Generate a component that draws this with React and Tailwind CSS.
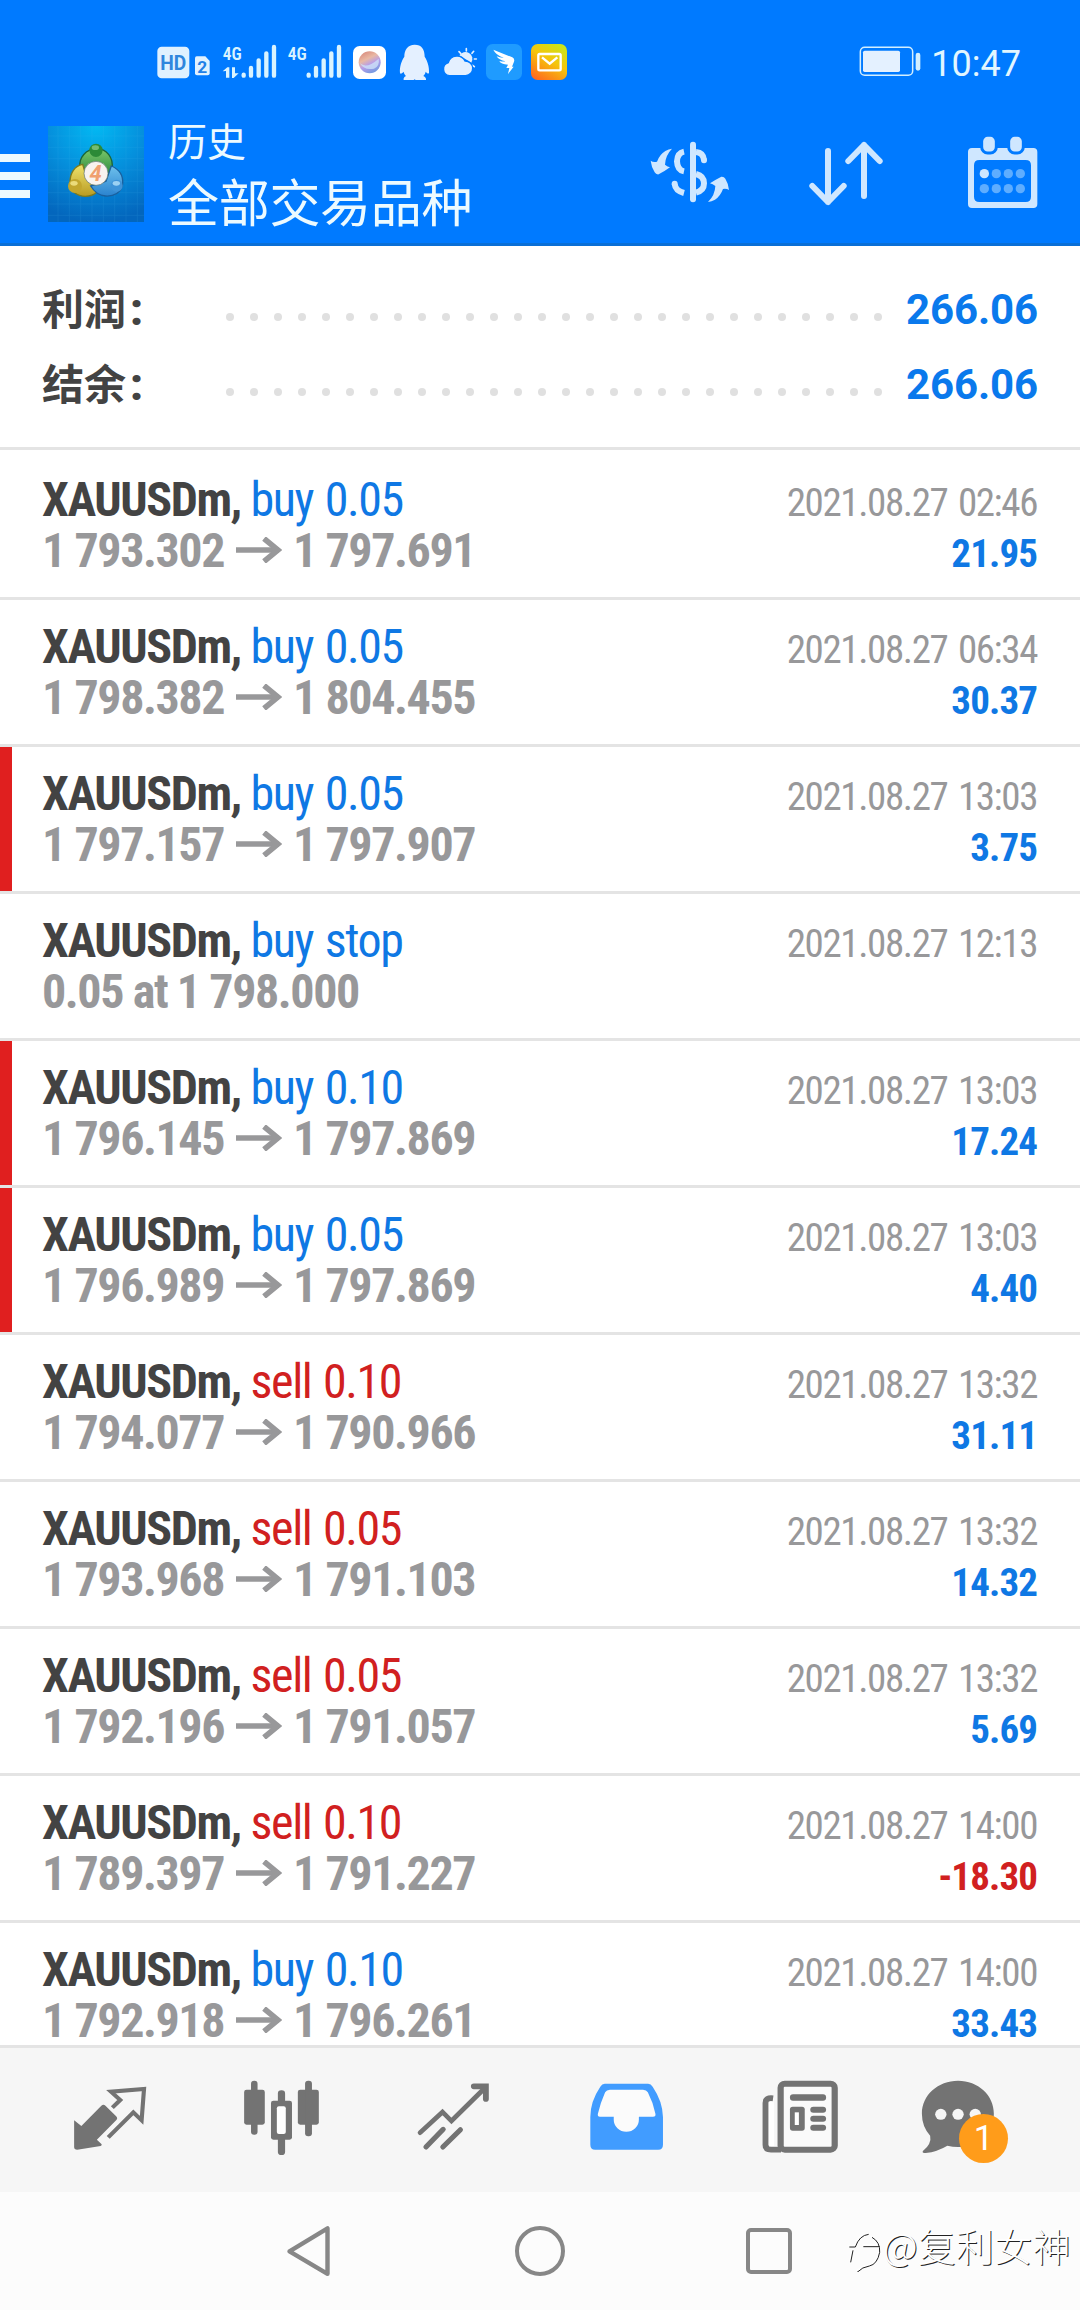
import React from "react";

const trades = [
  { side: "buy", volume: "0.05", open: "1 793.302", close: "1 797.691", time: "2021.08.27 02:46", profit: "21.95" },
  { side: "buy", volume: "0.05", open: "1 798.382", close: "1 804.455", time: "2021.08.27 06:34", profit: "30.37" },
  { side: "buy", volume: "0.05", open: "1 797.157", close: "1 797.907", time: "2021.08.27 13:03", profit: "3.75", marked: true },
  { side: "buy", volume: "stop", pending: "0.05 at 1 798.000", time: "2021.08.27 12:13" },
  { side: "buy", volume: "0.10", open: "1 796.145", close: "1 797.869", time: "2021.08.27 13:03", profit: "17.24", marked: true },
  { side: "buy", volume: "0.05", open: "1 796.989", close: "1 797.869", time: "2021.08.27 13:03", profit: "4.40", marked: true },
  { side: "sell", volume: "0.10", open: "1 794.077", close: "1 790.966", time: "2021.08.27 13:32", profit: "31.11" },
  { side: "sell", volume: "0.05", open: "1 793.968", close: "1 791.103", time: "2021.08.27 13:32", profit: "14.32" },
  { side: "sell", volume: "0.05", open: "1 792.196", close: "1 791.057", time: "2021.08.27 13:32", profit: "5.69" },
  { side: "sell", volume: "0.10", open: "1 789.397", close: "1 791.227", time: "2021.08.27 14:00", profit: "-18.30" },
  { side: "buy", volume: "0.10", open: "1 792.918", close: "1 796.261", time: "2021.08.27 14:00", profit: "33.43" },
];

const summary = [
  { label: "利润", value: "266.06" },
  { label: "结余", value: "266.06" },
];

const SignalBars = ({ x }) => (
  <g stroke="#d9f3ff" strokeWidth="13" strokeLinecap="round">
    <path d={`M${x} 134v3M${x + 22} 114v23M${x + 45} 91v46M${x + 68} 70v67M${x + 91} 51v86`} />
  </g>
);

const StatusBar = () => (
  <div className="flex h-[101px] items-start pt-[42px] pl-[156px] pr-[59px]">
    <svg className="h-10 w-14" viewBox="48 36 168 120">
      <rect x="52" y="50" width="96" height="95" rx="13" fill="#dff1ff" />
      <text x="100" y="119" textAnchor="middle" fontSize="60" textLength="78" lengthAdjust="spacingAndGlyphs" className="font-['Roboto'] font-bold" fill="#2f86dd">HD</text>
      <path d="M170 79h26l13 14v37q0 6-6 6h-32q-6 0-6-6V85q0-6 5-6z" fill="#dff1ff" />
      <text x="187" y="128" textAnchor="middle" fontSize="52" className="font-['Roboto'] font-bold" fill="#1f80e6">2</text>
    </svg>
    <svg className="ml-2.5 h-10 w-[55px]" viewBox="246 36 165 120">
      <text x="248" y="89" fontSize="56" textLength="57" lengthAdjust="spacingAndGlyphs" className="font-['Roboto_Condensed'] font-semibold" fill="#d9f3ff">4G</text>
      <path d="M248 124l14-12h6v31h-10v-20zM276 112h9v18h11l-15 14h-5z" fill="#d9f3ff" />
      <SignalBars x={311} />
    </svg>
    <svg className="ml-2.5 h-10 w-[55px]" viewBox="441 36 165 120">
      <text x="443" y="89" fontSize="56" textLength="57" lengthAdjust="spacingAndGlyphs" className="font-['Roboto_Condensed'] font-semibold" fill="#d9f3ff">4G</text>
      <SignalBars x={506} />
    </svg>
    <svg className="ml-2.5 h-10 w-[35px]" viewBox="636 36 105 120">
      <defs>
        <linearGradient id="ball" x1="0.2" y1="0" x2="0.7" y2="1">
          <stop offset="0" stopColor="#d98a7c" />
          <stop offset="0.35" stopColor="#e9b9a4" />
          <stop offset="0.6" stopColor="#b79ee8" />
          <stop offset="1" stopColor="#6e9ae0" />
        </linearGradient>
      </defs>
      <rect x="639" y="48" width="99" height="99" rx="20" fill="#fff" />
      <circle cx="689" cy="97" r="33" fill="url(#ball)" />
      <path d="M660 100q20 18 56-14q4 22-14 30q-30 6-42-16z" fill="#cfe6fa" opacity=".75" />
    </svg>
    <svg className="ml-3 h-10 w-[31px]" viewBox="777 36 93 120">
      <path d="M824 44c-21 0-31 15-31 36c-8 12-15 30-13 49c2 5 7 0 11-4c1 6 4 10 7 13c-6 3-8 6-7 12h30l3-2l3 2h31c1-6-2-9-8-12c4-4 6-8 7-13c4 5 9 8 10 3c1-19-5-36-13-48c0-22-9-36-30-36z" fill="#e4f0ff" />
    </svg>
    <svg className="ml-3 h-10 w-9" viewBox="906 36 108 120">
      <path d="M958 76a20 20 0 1 1 36 22" fill="#e4f0ff" />
      <path d="M979 56v7M957 65l5 5M1001 64l-5 6M1003 87h6M998 106l5 4" stroke="#e4f0ff" strokeWidth="5" strokeLinecap="round" />
      <path d="M928 137a20 20 0 0 1-3-39a27 27 0 0 1 50-5a22 22 0 0 1 2 44z" fill="#e4f0ff" stroke="#007aff" strokeWidth="4" />
    </svg>
    <svg className="ml-[7px] h-10 w-[38px]" viewBox="1035 36 114 120">
      <rect x="1038" y="42" width="108" height="108" rx="20" fill="#1f9bff" />
      <path d="M1060 59l57 23q8 5 5 13l-6 15h5l-17 22l4-18h-9l5-10q-22-1-26-11q13 3 18 1q-20-4-26-15q12 5 21 4q-24-8-31-24z" fill="#fff" />
    </svg>
    <svg className="ml-[7px] h-10 w-[38px]" viewBox="1170 36 114 120">
      <defs>
        <linearGradient id="mail" x1="0.8" y1="0" x2="0.2" y2="1">
          <stop offset="0" stopColor="#c9e51a" />
          <stop offset="0.45" stopColor="#f5c50c" />
          <stop offset="1" stopColor="#ff6a1e" />
        </linearGradient>
      </defs>
      <rect x="1173" y="42" width="108" height="108" rx="20" fill="url(#mail)" />
      <rect x="1195" y="72" width="67" height="49" rx="4" fill="none" stroke="#fff" strokeWidth="7" />
      <path d="M1206 82l23 19l23-19" fill="none" stroke="#fff" strokeWidth="7" />
    </svg>
    <div className="ml-auto flex h-10">
      <svg className="mr-2.5 h-10 w-[62px]" viewBox="58 36 186 120">
        <rect x="62" y="52" width="157" height="84" rx="13" fill="none" stroke="#d3efff" strokeWidth="4.5" />
        <rect x="70" y="62" width="111" height="64" rx="5" fill="#e4f1ff" />
        <rect x="228" y="68" width="14" height="54" rx="7" fill="#d3efff" />
      </svg>
      <span className="pt-px text-[36px] leading-[42px] text-[#e2f6ff]">10:47</span>
    </div>
  </div>
);

const AppLogo = () => (
  <svg className="h-24 w-24" viewBox="24 18 288 288">
    <defs>
      <radialGradient id="sky" cx="0.5" cy="0" r="1">
        <stop offset="0" stopColor="#02b9f3" />
        <stop offset="0.5" stopColor="#058fdc" />
        <stop offset="1" stopColor="#0366bd" />
      </radialGradient>
      <linearGradient id="green" x1="0" y1="0" x2="0" y2="1">
        <stop offset="0" stopColor="#7cc96a" />
        <stop offset="1" stopColor="#22803a" />
      </linearGradient>
      <linearGradient id="yellow" x1="0" y1="0" x2="0" y2="1">
        <stop offset="0" stopColor="#efe36c" />
        <stop offset="1" stopColor="#b99b22" />
      </linearGradient>
      <linearGradient id="azure" x1="0" y1="0" x2="0" y2="1">
        <stop offset="0" stopColor="#6ec0ec" />
        <stop offset="1" stopColor="#2a83cf" />
      </linearGradient>
    </defs>
    <rect x="24" y="18" width="288" height="288" fill="url(#sky)" />
    <path d="M54 18v288M88 18v288M122 18v288M156 18v288M190 18v288M224 18v288M258 18v288M292 18v288M24 48h288M24 82h288M24 116h288M24 150h288M24 184h288M24 218h288M24 252h288M24 286h288" stroke="#4bb9f0" strokeWidth="2" opacity=".18" />
    <g strokeWidth="4">
      <path d="M120 142c-4-30 18-54 49-56c32 0 52 28 47 60c-4 18-14 28-26 30l-50-20z" fill="url(#green)" stroke="#1c6537" />
      <path d="M128 133c-24 4-38 26-38 54c0 28 22 42 46 42c16 0 26-4 34-12l-32-50z" fill="url(#yellow)" stroke="#7d7a1d" />
      <path d="M214 138c24 10 36 30 34 54c-4 26-26 38-52 36c-22-2-34-14-44-30l46-14z" fill="url(#azure)" stroke="#1a609e" />
    </g>
    <circle cx="168" cy="91" r="20" fill="#2c8a37" />
    <ellipse cx="166" cy="83" rx="11" ry="7" fill="#93d08b" opacity=".7" />
    <circle cx="105" cy="198" r="21" fill="#c2a62d" />
    <ellipse cx="102" cy="190" rx="11" ry="7" fill="#f5e88f" opacity=".8" />
    <circle cx="230" cy="197" r="18" fill="#3e93d8" />
    <ellipse cx="229" cy="190" rx="11" ry="7" fill="#b4e1fa" opacity=".8" />
    <circle cx="168" cy="160" r="36" fill="#f8f3ef" stroke="#58706a" strokeWidth="2" />
    <text x="167" y="184" textAnchor="middle" fontSize="66" className="font-['Roboto'] font-bold italic" fill="#f0a070">4</text>
  </svg>
);

const Header = () => (
  <header className="h-[246px] border-b-[3px] border-[#0a6fd6] bg-[#007aff]">
    <StatusBar />
    <div className="flex items-start pr-10">
      <div className="mt-[53px] flex w-[30px] flex-col gap-2.5">
        <div className="h-2 bg-[#ecf9ff]"></div>
        <div className="h-2 bg-[#ecf9ff]"></div>
        <div className="h-2 bg-[#ecf9ff]"></div>
      </div>
      <div className="mt-[25px] ml-[18px]">
        <AppLogo />
      </div>
      <div className="mt-[8px] ml-6 font-['Noto_Sans_CJK_SC',sans-serif] text-[#ecfaff]">
        <div className="text-[39px] leading-[61px]">历史</div>
        <div className="text-[51px] leading-[61px] tracking-[-0.3px]">全部交易品种</div>
      </div>
      <div className="mt-[34px] ml-auto flex">
        {/* currency exchange */}
        <svg className="h-[76px] w-[84px]" viewBox="84 75 252 228" fill="#cfe7ff">
          <path d="M92 152q8 6 19 3q8-22 25-32q10-6 20-7q-20 20-21 48q8 6 15 8q-13 10-34 21q-8 1-12-6q-10-16-12-35z" />
          <path d="M327 240q-8-5-18-3q-8 22-24 32q-10 6-21 7q21-20 22-48q-8-6-16-8q14-10 34-20q8-1 12 6q9 14 11 34z" />
          <rect x="210" y="95" width="18" height="182" rx="9" />
          <path d="M192 125q-20 4-21 29q1 26 21 30M164 222q2 20 28 27M228 126q22 2 24 24M228 192q24 6 24 28t-24 28" fill="none" stroke="#cfe7ff" strokeWidth="18" />
          <circle cx="164" cy="221" r="9" />
          <circle cx="252" cy="151" r="9" />
        </svg>
        <svg className="ml-[75px] h-[76px] w-[79px]" viewBox="561 75 237 228" fill="none" stroke="#cfe7ff" strokeWidth="18" strokeLinecap="round" strokeLinejoin="round">
          <path d="M624 123v153M577 228l47 48l47-48M732 258V105M685 153l47-48l47 48" />
        </svg>
        <svg className="ml-20 h-[76px] w-[74px]" viewBox="1038 75 222 228">
          <path fillRule="evenodd" d="M1056 114H1240q12 0 12 12V282q0 12-12 12H1056q-12 0-12-12V126q0-12 12-12zM1078 150q-16 0-16 16v94q0 16 16 16h139q16 0 16-16v-94q0-16-16-16z" fill="#cfe7ff" />
          <rect x="1085" y="76" width="44" height="53" rx="18" fill="#cfe7ff" stroke="#007aff" strokeWidth="9" />
          <rect x="1166" y="76" width="44" height="53" rx="18" fill="#cfe7ff" stroke="#007aff" strokeWidth="9" />
          <circle cx="1093" cy="191" r="14" fill="#cfe7ff" />
          <g fill="#5eadff">
            <circle cx="1129" cy="191" r="14" />
            <circle cx="1165" cy="191" r="14" />
            <circle cx="1201" cy="191" r="14" />
            <circle cx="1093" cy="236" r="14" />
            <circle cx="1129" cy="236" r="14" />
            <circle cx="1165" cy="236" r="14" />
            <circle cx="1201" cy="236" r="14" />
          </g>
        </svg>
      </div>
    </div>
  </header>
);

const SummaryRow = ({ label, value }) => (
  <div className="flex h-[75px] items-center pr-[42px] pl-[42px] font-bold">
    <div className="w-[184px] text-[42px] leading-[75px] text-[#434343]">
      <span className="font-['Noto_Sans_CJK_SC',sans-serif]">{label}</span>
      <span className="ml-1 text-[44px] font-black">:</span>
    </div>
    <div className="mt-[17px] flex flex-1 gap-4">
      {Array.from({ length: 28 }, (_, i) => (
        <div key={i} className="size-2 rounded-full bg-[#e0e0e0]"></div>
      ))}
    </div>
    <span className="pt-0.5 text-[42px] leading-[75px] tracking-[-0.1px] text-[#0a79ec]">{value}</span>
  </div>
);

const PriceArrow = () => (
  <svg className="relative -top-1 mx-[11.5px] inline-block h-[26px] w-[46px] align-baseline" viewBox="0 0 46 26" fill="none" stroke="#98989a">
    <path d="M0 13h43" strokeWidth="5.6" />
    <path d="M28 1.500L42 13L28 24.500" strokeWidth="5.6" />
  </svg>
);

const TradeRow = ({ trade }) => {
  const loss = trade.profit?.startsWith("-");

  return (
    <div className="flex h-[147px] shrink-0 border-b-[3px] border-[#e4e4e4] font-['Roboto_Condensed',sans-serif]">
      <div className={`w-3 ${trade.marked ? "bg-[#e01f1f]" : ""}`}></div>
      <div className="flex-1 pt-[21px] pl-[30px] text-[48px] leading-[51px] tracking-[-1.42px] whitespace-pre">
        <div>
          <span className="font-bold text-[#434343]">XAUUSDm, </span>
          <span className={`[word-spacing:2px] ${trade.side === "buy" ? "text-[#0f78e4]" : "text-[#d12020]"}`}>
            {trade.side} {trade.volume}
          </span>
        </div>
        <div className="font-bold text-[#98989a]">
          {trade.pending ? (
            trade.pending
          ) : (
            <>
              {trade.open}
              <PriceArrow />
              {trade.close}
            </>
          )}
        </div>
      </div>
      <div className="pt-[25px] pr-[43px] text-right text-[39px] leading-[51px]">
        <div className="tracking-[-1.4px] text-[#98989a] [word-spacing:3px]">{trade.time}</div>
        <div className={`font-bold tracking-[-0.9px] ${loss ? "text-[#d12020]" : "text-[#0f78e4]"}`}>
          {trade.profit}
        </div>
      </div>
    </div>
  );
};

const TabBar = () => (
  <nav className="flex h-[147px] gap-20 border-t-[3px] border-[#e4e4e4] bg-[#f6f6f6] pt-[30px] pl-[70px]">
    {/* quotes */}
    <svg className="h-20 w-[90px]" viewBox="203 115 261.4 240" preserveAspectRatio="none">
      <path d="M215 242L236 259L294 198q6-6 12 0L337 230q6 6 0 12L281 300L295 314q1 3-3 5L224 330q-9 0-9-8z" fill="#737373" />
      <path d="M326 204L349 181L322 156L418 148L411 242L387 218L314 293" fill="none" stroke="#737373" strokeWidth="12" />
    </svg>
    {/* charts */}
    <svg className="h-20 w-[90px]" viewBox="697 115 261.4 240" preserveAspectRatio="none" fill="#737373">
      <rect x="709" y="150" width="60" height="105" rx="7" />
      <rect x="729" y="123" width="19" height="162" rx="9" />
      <rect x="865" y="150" width="61" height="105" rx="7" />
      <rect x="886" y="123" width="20" height="167" rx="9" />
      <rect x="807" y="152" width="21" height="40" rx="10" />
      <rect x="807" y="290" width="21" height="56" rx="10" />
      <rect x="787" y="183" width="61" height="117" rx="7" />
      <rect x="804" y="200" width="26" height="83" rx="6" fill="#fff" />
    </svg>
    {/* trade */}
    <svg className="h-20 w-[90px]" viewBox="1190.6 115 261.4 240" preserveAspectRatio="none" fill="none" stroke="#737373" strokeLinecap="round">
      <path d="M1220 279L1285 217L1311 244L1408 145" strokeWidth="14" />
      <path d="M1376 140H1411V178" strokeWidth="17" />
      <path d="M1237 322L1287 269M1286 322L1337 270" strokeWidth="15" />
    </svg>
    {/* history */}
    <svg className="h-20 w-[90px]" viewBox="116 115 261.4 240" preserveAspectRatio="none">
      <path d="M188 132H314q8 0 13 9Q356 185 357 232V315q0 15-14 15H160q-14 0-14-15V232Q146 185 175 141q5-9 13-9z" fill="#419cff" />
      <path d="M203 150H299q10 0 14 8Q328 188 335 222q2 9-7 9H287V240a36 36 0 0 1-73 0V231H174q-8 0-6-9Q176 188 189 158q4-8 14-8z" fill="#fbfbfb" />
    </svg>
    {/* news */}
    <svg className="h-20 w-[90px]" viewBox="610 115 261.4 240" preserveAspectRatio="none">
      <path d="M677 176q-22-3-22 14V315q0 15 16 15H700" fill="#fff" stroke="#737373" strokeWidth="17" />
      <path d="M680 165h12v154h-12z" fill="#f6f6f6" />
      <rect x="699" y="132" width="157" height="198" rx="12" fill="#fafafa" stroke="#737373" strokeWidth="18" />
      <g fill="#737373">
        <rect x="726" y="164" width="105" height="19" rx="9" />
        <rect x="726" y="201" width="43" height="72" rx="8" />
        <rect x="785" y="201" width="46" height="18" rx="9" />
        <rect x="785" y="228" width="46" height="18" rx="9" />
        <rect x="785" y="255" width="46" height="18" rx="9" />
      </g>
      <rect x="740" y="218" width="12" height="38" fill="#fff" />
    </svg>
    {/* messages */}
    <div className="relative h-20 w-[90px]">
      <svg className="h-20 w-[90px]" viewBox="1103.5 115 261.4 240" preserveAspectRatio="none">
        <path d="M1214 123C1272 123 1318 166 1318 222S1272 322 1214 322q-16 0-31-4Q1154 336 1120 340q-12 0-8-6Q1138 312 1133 288Q1109 260 1109 222C1109 166 1156 123 1214 123z" fill="#737373" />
        <circle cx="1164" cy="224" r="16.5" fill="#f6f6f6" />
        <circle cx="1214" cy="224" r="16.5" fill="#f6f6f6" />
        <circle cx="1264" cy="224" r="16.5" fill="#f6f6f6" />
      </svg>
      <span className="absolute top-[35.5px] left-[39px] flex size-[49px] items-center justify-center rounded-full bg-[#ff9c1a] text-[35px] leading-[49px] text-white">
        1
      </span>
    </div>
  </nav>
);

const SystemNav = () => (
  <div className="relative flex h-[118px] items-center bg-[#fcfcfc] pl-[286px]">
    <svg className="h-[52px] w-11" viewBox="0 0 44 52" fill="none" stroke="#878787" strokeWidth="4.4" strokeLinejoin="round">
      <path d="M3.5 26.3L41.5 3.4V48.8z" />
    </svg>
    <div className="ml-[185px] size-[50px] rounded-full border-[4.4px] border-[#878787]"></div>
    <div className="ml-[181px] size-[46px] rounded-[5px] border-[4.4px] border-[#878787]"></div>
    <div className="absolute top-7 left-[847px] flex items-center text-white">
      <svg className="h-[52px] w-[36px]" viewBox="21 0 108 156" fill="none">
        <path d="M25 78H44Q56 44 84 42M68 76H116M92 50Q120 62 117 94Q112 130 84 137Q66 138 48 155M38 88L30 124" stroke="#fff" strokeWidth="6" />
        <path d="M28 81H46Q58 46 86 43M39 91L32 127M70 80H119M96 52Q121 66 119 97Q112 133 88 138Q68 140 50 158" stroke="#222" strokeWidth="3" />
      </svg>
      <span className="-mt-[3px] font-['Noto_Sans_CJK_SC',sans-serif] text-[38px] leading-[52px] font-light tracking-[0.2px] whitespace-nowrap [text-shadow:1px_1px_0_#222]">
        @复利女神
      </span>
    </div>
  </div>
);

export default function App() {
  return (
    <div className="flex h-[2310px] w-[1080px] flex-col overflow-hidden bg-white font-['Roboto',sans-serif]">
      <Header />
      <section className="h-[204px] border-b-[3px] border-[#e4e4e4] pt-[25px]">
        {summary.map((item) => (
          <SummaryRow key={item.label} label={item.label} value={item.value} />
        ))}
      </section>
      <main className="flex h-[1595px] flex-col overflow-hidden pt-[3px]">
        {trades.map((trade, i) => (
          <TradeRow key={i} trade={trade} />
        ))}
      </main>
      <TabBar />
      <SystemNav />
    </div>
  );
}
